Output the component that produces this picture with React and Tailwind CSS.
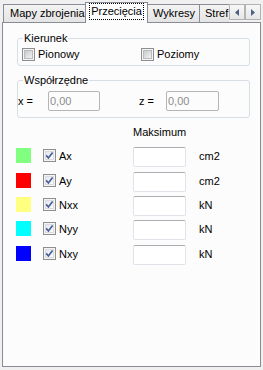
import React from "react";

const rows = [
  { color: "bg-[#80ff80]", label: "Ax", unit: "cm2", h: "h-[25px]" },
  { color: "bg-[#ff0000]", label: "Ay", unit: "cm2", h: "h-[24px]" },
  { color: "bg-[#ffff80]", label: "Nxx", unit: "kN", h: "h-[24px]" },
  { color: "bg-[#00ffff]", label: "Nyy", unit: "kN", h: "h-[25px]" },
  { color: "bg-[#0000ff]", label: "Nxy", unit: "kN", h: "h-[24px]" },
];

const CheckBox = ({ checked }) => (
  <span className="relative flex w-[13px] h-[13px] shrink-0 border border-[#8e8f8f] bg-[#f4f4f4] p-[1px]">
    {checked ? (
      <span className="flex-1 border border-[#d9dde3] bg-gradient-to-br from-[#e6e8ec] to-[#fbfbfb]" />
    ) : (
      <span className="flex-1 border border-[#b8bbbf] bg-gradient-to-br from-[#c9cbce] to-[#f1f1f1]" />
    )}
    {checked && (
      <svg className="absolute left-0 top-0" width="11" height="11" viewBox="0 0 11 11">
        <path d="M2.2 5.4 L4.4 8 L8.6 2.4" fill="none" stroke="#4a5f97" strokeWidth="1.7" />
      </svg>
    )}
  </span>
);

const Tab = ({ children, className }) => (
  <div className={`h-[18px] border-t border-[#898c95] bg-gradient-to-b from-[#f3f3f3] to-[#e4e4e4] overflow-hidden whitespace-nowrap leading-[13px] pt-[2px] ${className}`}>
    {children}
  </div>
);

const ScrollButton = ({ dir }) => (
  <div className="w-[16px] h-[16px] flex items-center justify-center border border-[#b3b3b3] bg-gradient-to-b from-[#f7f7f7] to-[#e6e6e6]">
    <svg width="4" height="7" viewBox="0 0 4 7">
      {dir === "left" ? (
        <path d="M4 0 L0 3.5 L4 7 Z" fill="#4d6185" />
      ) : (
        <path d="M0 0 L4 3.5 L0 7 Z" fill="#4d6185" />
      )}
    </svg>
  </div>
);

export default function App() {
  return (
    <div className="w-[263px] h-[370px] bg-[#f0f0f0] px-[2px] text-[11px] text-black font-['Liberation_Sans',Arial,sans-serif]">
      {/* tab strip */}
      <div className="flex items-end h-[22px] pl-[1px]">
        <Tab className="w-[82px] border-l pl-[6px]">Mapy zbrojenia</Tab>
        <div className="relative z-10 w-[63px] h-[21px] -mb-[1px] border border-b-0 border-[#898c95] bg-[#fcfcfc] flex justify-center">
          <span className="h-[17px] border border-dotted border-black px-[1px] py-[1px] leading-[13px]">
            Przecięcia
          </span>
        </div>
        <Tab className="w-[52px] border-r pl-[5px]">Wykresy</Tab>
        <Tab className="w-[29px] pl-[5px]">Stref</Tab>
        <div className="flex self-start mt-[4px]">
          <ScrollButton dir="left" />
          <ScrollButton dir="right" />
        </div>
      </div>

      {/* panel */}
      <div className="w-[259px] h-[345px] border border-[#898c95] bg-[#fcfcfc] pt-[15px]">
        <div className="relative ml-[14px] w-[233px] h-[28px] border border-[#d5dfe5] rounded-[3px] pl-[4px] pt-[9px]">
          <span className="absolute left-[5px] -top-[7px] px-[1px] bg-[#fcfcfc] leading-[13px]">Kierunek</span>
          <div className="flex items-center h-[13px]">
            <div className="flex items-center gap-[3px] w-[119px]">
              <CheckBox />
              <span className="leading-[13px]">Pionowy</span>
            </div>
            <div className="flex items-center gap-[3px]">
              <CheckBox />
              <span className="leading-[13px]">Poziomy</span>
            </div>
          </div>
        </div>

        <div className="relative mt-[14px] ml-[14px] w-[233px] h-[38px] border border-[#d5dfe5] rounded-[3px] pt-[10px]">
          <span className="absolute left-[5px] -top-[7px] px-[1px] bg-[#fcfcfc] leading-[13px]">Współrzędne</span>
          <div className="flex items-center h-[20px]">
            <span className="w-[30px] leading-[13px]">x =</span>
            <div className="w-[52px] h-[20px] border border-[#b5b5b5] rounded-[2px] bg-[#fcfcfc] pl-[1px] flex items-center text-[#8d8d8d] leading-[13px]">
              0,00
            </div>
            <span className="ml-[39px] w-[27px] leading-[13px]">z =</span>
            <div className="w-[53px] h-[20px] border border-[#b5b5b5] rounded-[2px] bg-[#fcfcfc] pl-[1px] flex items-center text-[#8d8d8d] leading-[13px]">
              0,00
            </div>
          </div>
        </div>

        <div className="mt-[8px] ml-[130px] leading-[13px]">Maksimum</div>

        <div className="mt-[5px] flex flex-col">
          {rows.map((r) => (
            <div key={r.label} className={`flex items-start ${r.h}`}>
              <span className={`ml-[13px] mt-[4px] w-[15px] h-[15px] ${r.color}`} />
              <span className="ml-[12px] mt-[5px]">
                <CheckBox checked />
              </span>
              <span className="ml-[3px] mt-[6px] w-[74px] leading-[13px]">{r.label}</span>
              <div className="mt-[3px] w-[53px] h-[20px] border border-[#e2e3ea] border-t-[#abadb3] rounded-[2px] bg-white" />
              <span className="ml-[13px] mt-[6px] leading-[13px]">{r.unit}</span>
            </div>
          ))}
        </div>
      </div>
    </div>
  );
}
